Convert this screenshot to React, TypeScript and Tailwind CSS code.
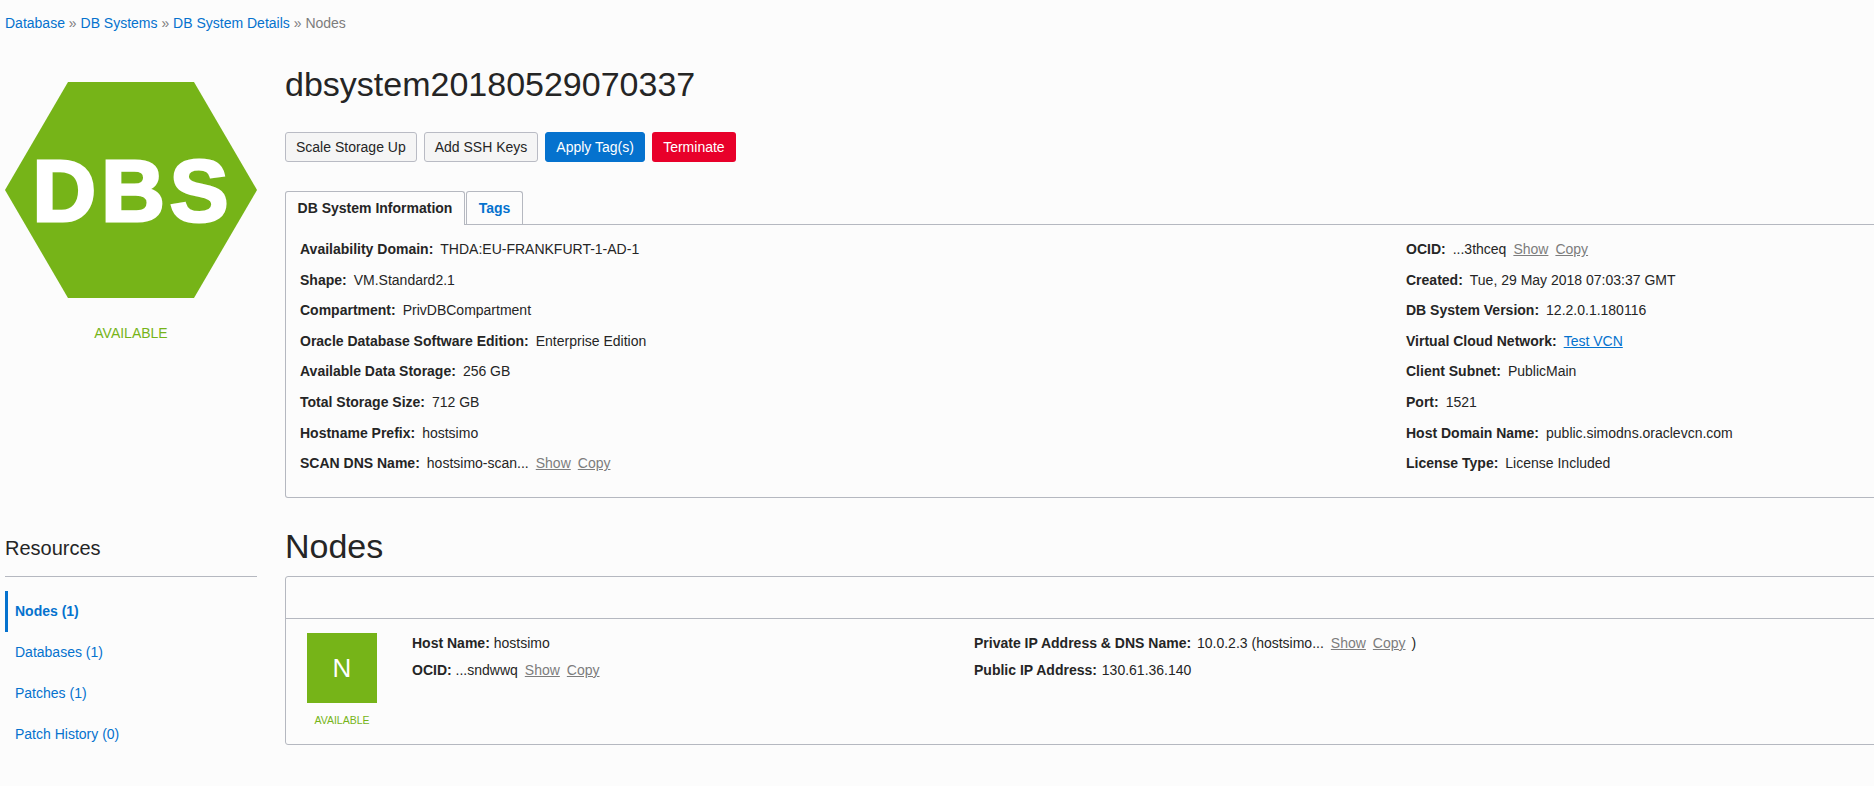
const sans = "[font-family:'Liberation_Sans',Arial,sans-serif]";

function Action({ children }: { children: React.ReactNode }) {
  return <span className="ml-[7px] text-[#7d7d7d] underline">{children}</span>;
}

function Row({ label, children }: { label: string; children: React.ReactNode }) {
  return (
    <div className="h-[30.6px] flex items-center whitespace-pre">
      <b className="font-bold mr-[7px]">{label}</b>
      {children}
    </div>
  );
}

function NavItem({ label, active }: { label: string; active?: boolean }) {
  return (
    <div
      className={
        active
          ? "h-[41px] flex items-center pl-[7px] border-l-[3px] border-[#0572ce] font-bold text-[#0572ce]"
          : "h-[41px] flex items-center pl-[10px] text-[#0572ce]"
      }
    >
      {label}
    </div>
  );
}

function Button({ label, variant }: { label: string; variant: "plain" | "blue" }) {
  const look =
    variant === "plain"
      ? "bg-[#f5f5f5] border-[#b9bbc4] text-[#252525]"
      : "bg-[#0572ce] border-[#0572ce] text-white";
  return (
    <div className={`h-[30px] px-[10px] flex items-center border rounded-[3px] ${look}`}>{label}</div>
  );
}

export default function App() {
  return (
    <div className={`${sans} w-[1874px] h-[786px] overflow-hidden bg-[#fcfcfc] text-[14px] text-[#252525]`}>
      <div className="h-[46px] pl-[5px] flex items-center text-[#7d7d7d] whitespace-pre">
        <span className="text-[#0572ce]">Database</span> » <span className="text-[#0572ce]">DB Systems</span> »{" "}
        <span className="text-[#0572ce]">DB System Details</span> » Nodes
      </div>

      <div className="flex pl-[5px] gap-[28px] w-[2600px]">
        <aside className="w-[252px] shrink-0 flex flex-col">
          <svg viewBox="0 0 252 216" className="w-[252px] h-[216px] mt-[36px]">
            <polygon points="0,108 63,0 189,0 252,108 189,216 63,216" fill="#76b418" />
            <text
              x="128"
              y="139"
              textAnchor="middle"
              fontFamily="'Liberation Sans', Arial, sans-serif"
              fontWeight="700"
              fontSize="88"
              letterSpacing="5"
              fill="#ffffff"
              stroke="#ffffff"
              strokeWidth="3"
            >
              DBS
            </text>
          </svg>
          <div className="mt-[27px] text-center text-[#76b418] leading-[16px]">AVAILABLE</div>
          <div className="mt-[195px] text-[20px] leading-[24px] text-[#252525]">Resources</div>
          <div className="mt-[16px] border-t border-[#b5b8c0]" />
          <div className="mt-[14px] flex flex-col">
            <NavItem label="Nodes (1)" active />
            <NavItem label="Databases (1)" />
            <NavItem label="Patches (1)" />
            <NavItem label="Patch History (0)" />
          </div>
        </aside>

        <main className="flex-1 flex flex-col">
          <h1 className="mt-[15px] text-[34px] leading-[46px] font-normal text-[#252525]">dbsystem20180529070337</h1>
          <div className="mt-[25px] flex gap-[7px]">
            <Button label="Scale Storage Up" variant="plain" />
            <Button label="Add SSH Keys" variant="plain" />
            <Button label="Apply Tag(s)" variant="blue" />
            <div className="w-[84px] h-[30px] flex items-center justify-center rounded-[3px] bg-[#e8002a] text-white">Terminate</div>
          </div>

          <div className="mt-[29px] h-[33px] flex border-b border-[#b5b8c0] box-content">
            <div className="w-[180px] h-[34px] flex items-center justify-center font-bold bg-[#fcfcfc] border border-b-0 border-[#b5b8c0] rounded-t-[3px]">
              DB System Information
            </div>
            <div className="ml-[1px] w-[57px] h-[33px] flex items-center justify-center font-bold text-[#0572ce] border border-b-0 border-[#b5b8c0] rounded-t-[3px]">
              Tags
            </div>
          </div>

          <div className="h-[273px] border border-t-0 border-[#b5b8c0] rounded-b-[3px] flex pl-[14px] pt-[9.3px]">
            <div className="w-[1106px]">
              <Row label="Availability Domain:">THDA:EU-FRANKFURT-1-AD-1</Row>
              <Row label="Shape:">VM.Standard2.1</Row>
              <Row label="Compartment:">PrivDBCompartment</Row>
              <Row label="Oracle Database Software Edition:">Enterprise Edition</Row>
              <Row label="Available Data Storage:">256 GB</Row>
              <Row label="Total Storage Size:">712 GB</Row>
              <Row label="Hostname Prefix:">hostsimo</Row>
              <Row label="SCAN DNS Name:">
                hostsimo-scan...
                <Action>Show</Action>
                <Action>Copy</Action>
              </Row>
            </div>
            <div>
              <Row label="OCID:">
                ...3thceq
                <Action>Show</Action>
                <Action>Copy</Action>
              </Row>
              <Row label="Created:">Tue, 29 May 2018 07:03:37 GMT</Row>
              <Row label="DB System Version:">12.2.0.1.180116</Row>
              <Row label="Virtual Cloud Network:">
                <span className="text-[#0572ce] underline">Test VCN</span>
              </Row>
              <Row label="Client Subnet:">PublicMain</Row>
              <Row label="Port:">1521</Row>
              <Row label="Host Domain Name:">public.simodns.oraclevcn.com</Row>
              <Row label="License Type:">License Included</Row>
            </div>
          </div>

          <h2 className="mt-[25px] text-[34px] leading-[46px] font-normal text-[#252525]">Nodes</h2>

          <div className="mt-[7px] h-[169px] border border-[#b5b8c0] rounded-[3px]">
            <div className="h-[42px] border-b border-[#b5b8c0]" />
            <div className="flex pl-[21px] pt-[14px]">
              <div className="w-[70px] flex flex-col items-center">
                <div className="w-[70px] h-[70px] bg-[#76b418] flex items-center justify-center text-white text-[26px]">N</div>
                <div className="mt-[10px] text-[10.5px] leading-[14px] text-[#76b418] whitespace-nowrap">AVAILABLE</div>
              </div>
              <div className="ml-[35px] w-[562px]">
                <div className="h-[20px] whitespace-pre"><b>Host Name:</b> hostsimo</div>
                <div className="mt-[7px] h-[20px] whitespace-pre">
                  <b>OCID:</b> ...sndwwq<Action>Show</Action><Action>Copy</Action>
                </div>
              </div>
              <div>
                <div className="h-[20px] whitespace-pre">
                  <b className="mr-[2px]">Private IP Address &amp; DNS Name:</b> 10.0.2.3 (hostsimo...
                  <Action>Show</Action><Action>Copy</Action> <span className="ml-[2px]">)</span>
                </div>
                <div className="mt-[7px] h-[20px] whitespace-pre"><b className="mr-[1px]">Public IP Address:</b> 130.61.36.140</div>
              </div>
            </div>
          </div>
        </main>
      </div>
    </div>
  );
}
